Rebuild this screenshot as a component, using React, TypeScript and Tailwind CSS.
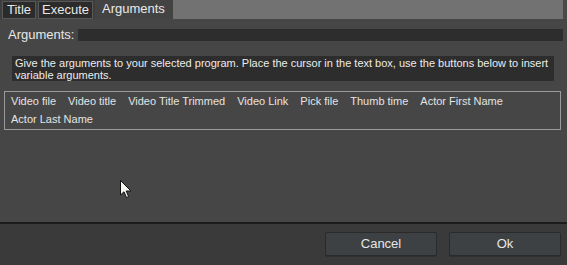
import React from 'react';

const tabs = [
  { label: 'Title', w: 'w-[34px]', active: false },
  { label: 'Execute', w: 'w-[55px]', active: false },
  { label: 'Arguments', w: 'w-[78px]', active: true },
];

const variables = [
  'Video file',
  'Video title',
  'Video Title Trimmed',
  'Video Link',
  'Pick file',
  'Thumb time',
  'Actor First Name',
  'Actor Last Name',
];

const Cursor: React.FC = () => (
  <svg className="absolute left-[120px] top-[180px]" width="13" height="19" viewBox="0 0 13 19">
    <path d="M0.5 0.5 L0.5 15 L4 11.8 L6.5 17.5 L8.6 16.6 L6.2 11 L11 11 Z" fill="#f4f6f0" stroke="#111" strokeWidth="1" />
  </svg>
);

export default function App() {
  return (
    <div className="relative w-[567px] h-[265px] flex flex-col bg-[#464646] text-[#e8e8e8] font-['Liberation_Sans',Arial,sans-serif] overflow-hidden">
      {/* tab strip */}
      <div className="h-[19px] flex bg-[#3e3e3e] shrink-0">
        <div className="flex gap-[2px] pl-[2px] pt-[1px]">
          {tabs.map((t) =>
            t.active ? (
              <div key={t.label} className={`${t.w} -mt-[1px] h-[19px] pl-[7px] text-[13px] leading-[17px] bg-[#434343] text-[#eaeaea]`}>
                {t.label}
              </div>
            ) : (
              <div
                key={t.label}
                className={`${t.w} h-[18px] border border-[#585858] bg-[#2b2b2b] text-[13px] leading-[16px] text-center`}
              >
                {t.label}
              </div>
            )
          )}
        </div>
        <div className="flex-1 bg-[#727272]" />
        <div className="w-[4px] bg-[#4a4a4a]" />
      </div>

      {/* arguments field */}
      <div className="flex items-center mt-[10px] pl-[8px] pr-[4px] h-[12px]">
        <span className="w-[70px] text-[13px] leading-[12px]">Arguments:</span>
        <div className="flex-1 h-[12px] bg-[#2d2d2d]" />
      </div>

      {/* description */}
      <div className="ml-[12px] w-[542px] h-[25px] mt-[15px] bg-[#2d2d2d] px-[3px] pt-[1px] text-[11px] leading-[12px] text-[#ececec]">
        Give the arguments to your selected program. Place the cursor in the text box, use the buttons below to insert
        variable arguments.
      </div>

      {/* variable buttons */}
      <div className="ml-[4px] w-[557px] h-[39px] mt-[10px] border border-[#9a9a9a] flex flex-wrap content-start">
        {variables.map((v) => (
          <button key={v} className="h-[18px] px-[6px] text-[11px] leading-[18px] text-[#e4e4e4] whitespace-nowrap">
            {v}
          </button>
        ))}
      </div>

      <div className="flex-1" />

      {/* footer */}
      <div className="h-[2px] bg-[#1c1c1c] shrink-0" />
      <div className="h-[41px] bg-[#3a3a3a] flex justify-end items-start gap-[12px] pt-[8px] pr-[6px] shrink-0">
        <button className="w-[112px] h-[24px] rounded-[2px] border border-[#2a2a2a] bg-[#3d4143] text-[13px] text-[#e6e6e6] shadow-[0_1px_0_#2f2f2f]">
          Cancel
        </button>
        <button className="w-[112px] h-[24px] rounded-[2px] border border-[#2a2a2a] bg-[#3d4143] text-[13px] text-[#e6e6e6] shadow-[0_1px_0_#2f2f2f]">
          Ok
        </button>
      </div>

      <Cursor />
    </div>
  );
}
